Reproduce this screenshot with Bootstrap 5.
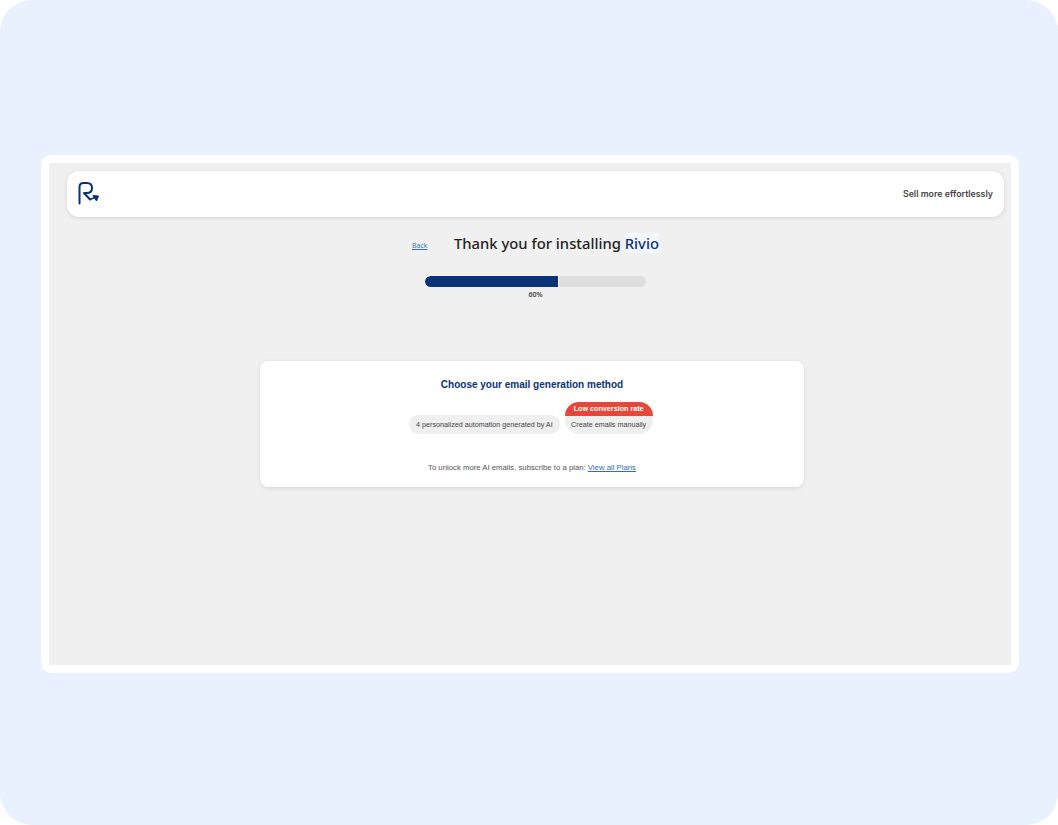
<!DOCTYPE html>
<html lang="en">
<head>
<meta charset="utf-8">
<title>Rivio onboarding</title>
<link href="https://cdn.jsdelivr.net/npm/bootstrap@5.3.0/dist/css/bootstrap.min.css" rel="stylesheet">
<style>
html,body{height:100%;margin:0;background:#fff;overflow:hidden}
.stage{width:1058px;height:825px;background:#e9f1fe;border-radius:32px;padding:155px 39px 152px 41px}
.frame{width:978px;height:518px;background:#fff;border-radius:10px;padding:8px}
.app{height:502px;background:#f0f0f0;padding:8px 7px 0 18px}
.topbar{height:46px;background:#fff;border-radius:12px;box-shadow:0 1px 4px rgba(0,0,0,.12);padding:0 11px 2px 10px}
.slogan{font:600 8.8px Inter,sans-serif;color:#444}
.headrow{height:38px;margin-top:8px;padding-left:345px}
.back{font:7px "Open Sans",sans-serif;color:#2f6fb5;width:42px;padding-top:3px}
.maintitle{font:500 14.8px/36px "Noto Sans",sans-serif;color:#222;margin:0 0 2px}
.brandword{color:#0a3278;background:#f3f7fe}
.progwrap{width:221px;margin:13px 0 0 358px}
.progbar{height:11px;background:#dedede;border-radius:6px}
.progfill{background:#0a3278;border-radius:6px 0 0 6px;border-right:1px solid #fff}
.pct{font:600 7px "Noto Sans",sans-serif;color:#444;text-align:center;margin:3px 0 0 0;line-height:10px}
.methodcard{width:544px;height:126px;margin:61px 0 0 193px;background:#fff;border-radius:8px;box-shadow:0 1px 4px rgba(0,0,0,.12);padding-top:17px}
.methodtitle{font:700 10px "Liberation Sans",sans-serif;color:#0a3278;margin:0;line-height:14px;text-align:center}
.choices{margin-top:10px;height:32px;padding-left:149px;gap:5px}
.choice{font:7.2px "Liberation Sans",sans-serif;color:#444;background:#efefef;height:19px;line-height:19px;border-radius:10px;padding:0 7px;white-space:nowrap}
.choicebox{width:88px;border-radius:14px;overflow:hidden;height:32px;background:#efefef}
.ribbon{height:14px;background:#e5483a;color:#fff;font:700 7.2px/13px "Liberation Sans",sans-serif;text-align:center}
.choicebox .choice{background:transparent;text-align:center;padding:0;height:18px;line-height:18px;border-radius:0}
.unlock{font:7.76px "Liberation Sans",sans-serif;color:#555;text-align:center;margin:28px 0 0;line-height:12px}
.unlock a{color:#2f6fb5}
</style>
</head>
<body>
<div class="stage">
  <div class="frame">
    <div class="app">
      <div class="topbar d-flex align-items-center justify-content-between">
        <svg width="24" height="24" viewBox="0 0 24 24" fill="none" stroke="#0a3278" aria-label="Rivio logo">
          <path d="M2.500 22.500V6C2.500 3.500 4 2 6.500 2H10C13.500 2 15 4.500 15 7C15 10 13 12 10 12H7L13 18.500" stroke-width="2" stroke-linecap="round" stroke-linejoin="round"/>
          <path d="M13 18.500L19 16" stroke-width="1.500"/>
          <path d="M16 14.500L21.500 15L19.500 20Z" fill="#0a3278" stroke-width="1"/>
        </svg>
        <span class="slogan">Sell more effortlessly</span>
      </div>
      <div class="headrow d-flex align-items-center">
        <a class="back" href="#">Back</a>
        <h1 class="maintitle">Thank you for installing <span class="brandword">Rivio</span></h1>
      </div>
      <div class="progwrap">
        <div class="progress progbar"><div class="progress-bar progfill" style="width:60.500%"></div></div>
        <p class="pct">60%</p>
      </div>
      <div class="methodcard">
        <p class="methodtitle">Choose your email generation method</p>
        <div class="choices d-flex align-items-end">
          <div class="choice">4 personalized automation generated by AI</div>
          <div class="choicebox">
            <div class="ribbon">Low conversion rate</div>
            <div class="choice">Create emails manually</div>
          </div>
        </div>
        <p class="unlock">To unlock more AI emails, subscribe to a plan: <a href="#">View all Plans</a></p>
      </div>
    </div>
  </div>
</div>
<script src="https://cdn.jsdelivr.net/npm/bootstrap@5.3.0/dist/js/bootstrap.bundle.min.js"></script>
</body>
</html>
